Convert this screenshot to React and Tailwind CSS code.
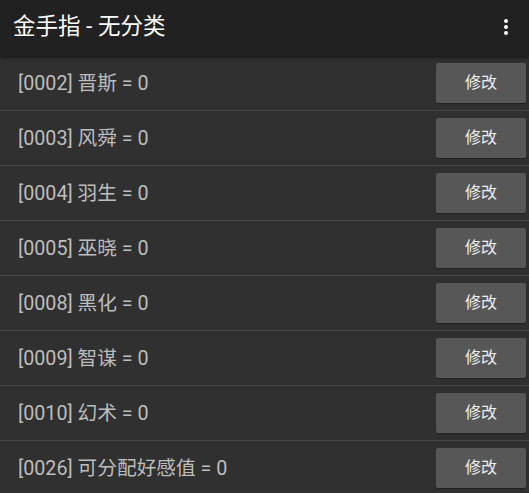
import React from "react";

const items = [
  ["0002", "晋斯"],
  ["0003", "风舜"],
  ["0004", "羽生"],
  ["0005", "巫晓"],
  ["0008", "黑化"],
  ["0009", "智谋"],
  ["0010", "幻术"],
  ["0026", "可分配好感值"],
];

const font = { fontFamily: "Roboto, 'Noto Sans CJK SC', sans-serif" };

export default function App() {
  return (
    <div className="w-[529px] h-[493px] overflow-hidden bg-[#303030] flex flex-col" style={font}>
      <div className="relative z-10 h-14 shrink-0 bg-[#212121] flex items-center justify-between pl-[13px] pr-[21px] shadow-[0_2px_3px_rgba(0,0,0,0.45)]">
        <div className="text-[22.5px] text-white leading-none -mt-[3px]">金手指 - 无分类</div>
        <div className="flex flex-col gap-[2px] -mt-[3px]">
          <div className="w-1 h-1 rounded-full bg-white"></div>
          <div className="w-1 h-1 rounded-full bg-white"></div>
          <div className="w-1 h-1 rounded-full bg-white"></div>
        </div>
      </div>
      <div className="flex flex-col">
        {items.map(([id, name]) => (
          <div key={id} className="h-[55px] shrink-0 flex items-center justify-between border-b border-[#494949] pl-[18px] pr-[3px]">
            <div className="text-[19.7px] text-[#bdbdbd] leading-none mt-[1px]">[{id}] {name} = 0</div>
            <button className="w-[90px] h-10 rounded-[2px] bg-[#575757] text-[16px] text-[#ececec] flex items-center justify-center shadow-[0_1px_1px_rgba(0,0,0,0.3)]">修改</button>
          </div>
        ))}
      </div>
    </div>
  );
}
